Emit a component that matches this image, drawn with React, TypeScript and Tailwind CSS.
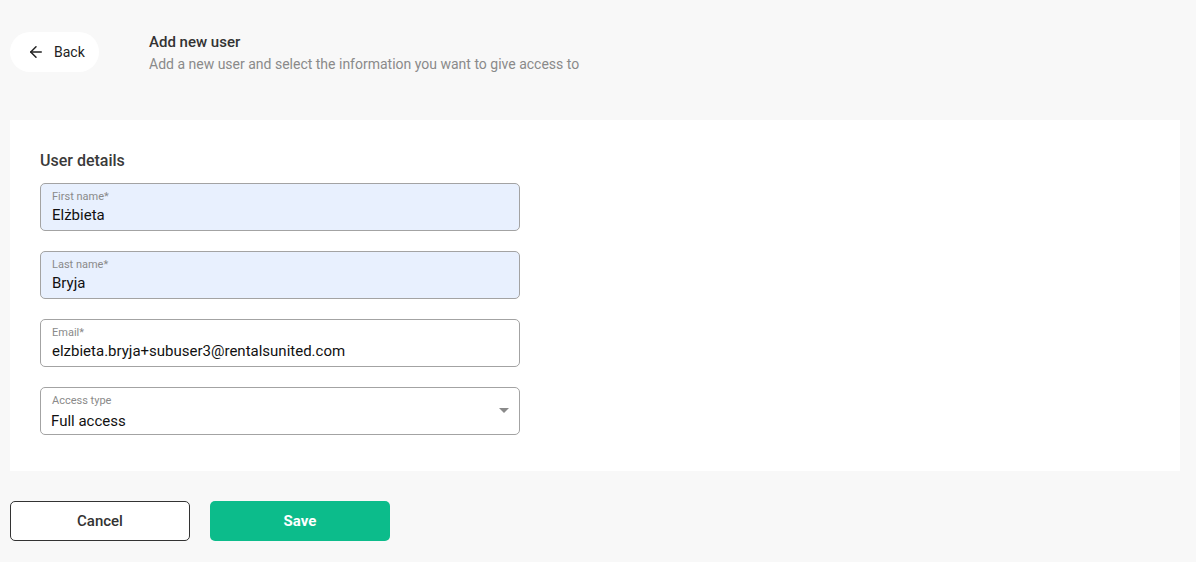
import { ArrowLeft } from 'lucide-react';

interface FieldProps {
  label: string;
  value: string;
  filled?: boolean;
  select?: boolean;
}

function Field({ label, value, filled = false, select = false }: FieldProps) {
  return (
    <div
      className={`relative h-12 w-[480px] rounded-[5px] border border-[#a3a3a3] pl-[11px] pt-[6px] ${
        filled ? 'bg-[#e8f0fe]' : 'bg-white'
      }`}
    >
      <div className="text-[11px] leading-[13px] text-[#8a8a8a]">{label}</div>
      <div className={`text-[15px] leading-[20px] text-[#111] ${select ? 'mt-[4px] -ml-[1px]' : 'mt-[2px]'}`}>{value}</div>
      {select && (
        <span className="absolute right-[10px] top-[20px] h-0 w-0 border-x-[5px] border-t-[5px] border-x-transparent border-t-[#8a8a8a]" />
      )}
    </div>
  );
}

export default function App() {
  return (
    <div className="min-h-[562px] bg-[#f8f8f8] px-[10px] pb-[21px] pt-[32px] font-['Roboto',sans-serif] text-[#333]">
      {/* header */}
      <div className="flex items-start gap-[50px]">
        <button className="flex h-10 w-[89px] items-center gap-[9px] rounded-full bg-white pl-[17px] text-[14px] text-[#222]">
          <ArrowLeft className="h-[18px] w-[18px]" strokeWidth={2} />
          Back
        </button>
        <div>
          <h1 className="text-[15px] font-medium leading-5 text-[#333]">Add new user</h1>
          <p className="mt-[2px] text-[14px] leading-5 text-[#8a8a8a]">
            Add a new user and select the information you want to give access to
          </p>
        </div>
      </div>

      {/* card */}
      <div className="mt-[46px] w-[1170px] bg-white pb-[36px] pl-[30px] pt-[31px]">
        <h2 className="text-[16px] font-medium leading-5 text-[#3a3a3a]">User details</h2>
        <div className="mt-[12px] flex flex-col gap-5">
          <Field label="First name*" value="Elżbieta" filled />
          <Field label="Last name*" value="Bryja" filled />
          <Field label="Email*" value="elzbieta.bryja+subuser3@rentalsunited.com" />
          <Field label="Access type" value="Full access" select />
        </div>
      </div>

      {/* actions */}
      <div className="mt-[30px] flex gap-5">
        <button className="h-10 w-[180px] rounded-[5px] border border-[#333] bg-white text-[15px] font-medium text-[#333]">
          Cancel
        </button>
        <button className="h-10 w-[180px] rounded-[5px] bg-[#0cbc8b] text-[15px] font-bold text-white">
          Save
        </button>
      </div>
    </div>
  );
}
